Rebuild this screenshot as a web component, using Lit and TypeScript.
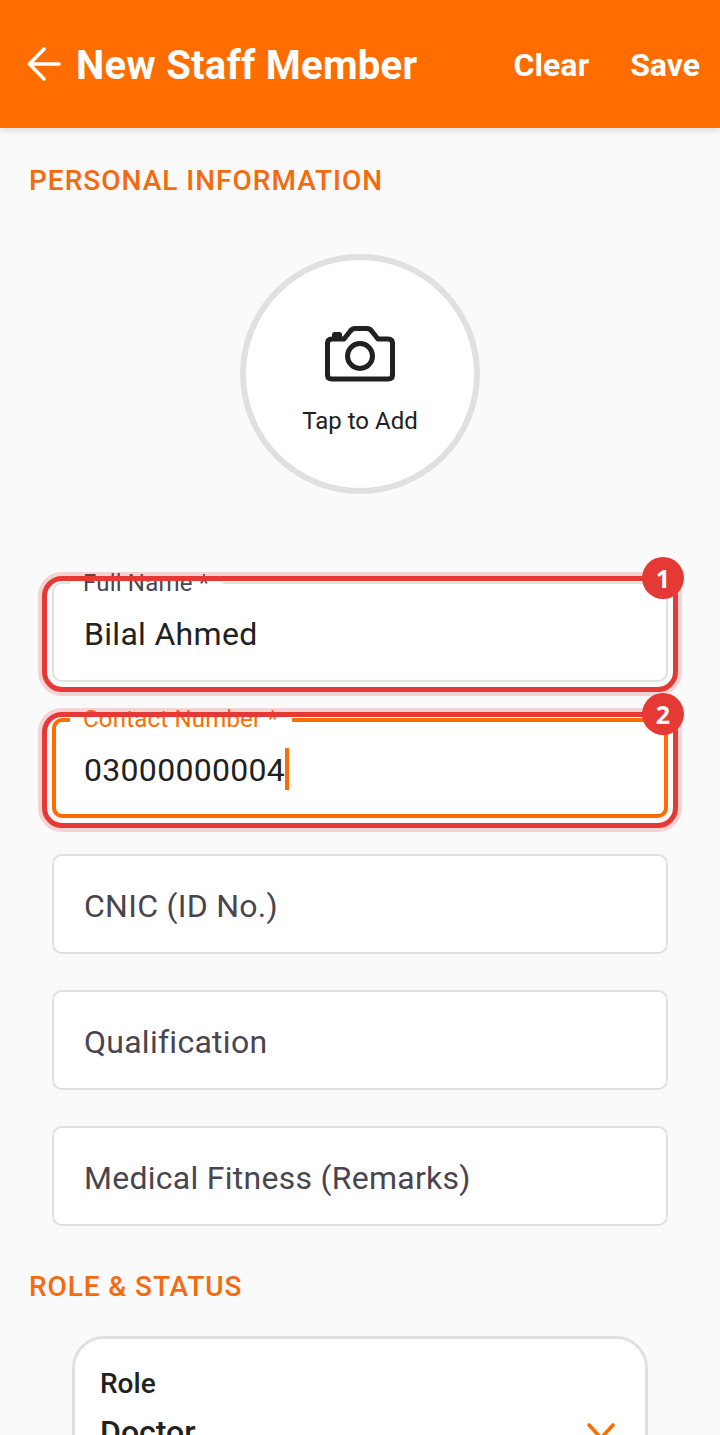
import { LitElement, html, css, svg } from "lit";
import { customElement } from "lit/decorators.js";

interface Field { label: string; value?: string; badge?: number; focus?: boolean; }
const fields: Field[] = [
  { label: "Full Name *", value: "Bilal Ahmed", badge: 1 },
  { label: "Contact Number *", value: "03000000004", badge: 2, focus: true },
  { label: "CNIC (ID No.)" },
  { label: "Qualification" },
  { label: "Medical Fitness (Remarks)" },
];

@customElement("app-root")
export class AppRoot extends LitElement {
  static styles = css`
    :host { display: block; width: 720px; height: 1435px; overflow: hidden; background: #fafafa; font-family: Roboto, "Noto Sans", sans-serif; color: #212121; }
    .bar { height: 128px; background: #ff6d00; box-shadow: 0 2px 8px rgba(0,0,0,.14); display: flex; align-items: center; padding: 0 20px 0 27px; color: #fff; position: relative; box-sizing: border-box; }
    .back { width: 34px; height: 34px; flex: none; margin-right: 16px; }
    .title { font-size: 40px; font-weight: 700; flex: 1; white-space: nowrap; letter-spacing: .25px; margin-top: 3px; margin-left: -1px; }
    .action { font-size: 32px; font-weight: 700; margin-left: 41px; margin-top: 2px; }
    .section { font-size: 28px; font-weight: 500; letter-spacing: 1px; color: #f56a0e; line-height: 32px; padding-left: 29px; }
    .s1 { margin-top: 36px; padding-top: 1px; }
    .avatar { box-sizing: border-box; width: 240px; height: 240px; margin: 57px auto 0; border: 6px solid #e0e0e0; border-radius: 50%; background: #fff; display: flex; flex-direction: column; align-items: center; }
    .cam { width: 70px; height: 56px; margin-top: 66px; display: block; }
    .tap { font-size: 24px; line-height: 30px; margin-top: 24px; }
    .fields { display: flex; flex-direction: column; gap: 36px; margin: 88px 52px 0; }
    .field { position: relative; box-sizing: border-box; height: 100px; border: 2px solid #e0e0e0; border-radius: 10px; background: #fff; display: flex; align-items: center; padding: 4px 0 0 30px; font-size: 32px; }
    .field.focus { border: 4px solid #ff6d00; padding-left: 28px; }
    .value { color: #212121; letter-spacing: .3px; }
    .ph { color: #49454f; letter-spacing: .27px; }
    .caret { display: inline-block; width: 4px; height: 42px; background: #ff6d00; margin-top: -2px; }
    .label { position: absolute; left: 16px; top: -15px; padding: 0 14px 0 13px; font-size: 24px; line-height: 28px; background: linear-gradient(transparent 13px, #fff 13px); color: #49454f; white-space: nowrap; letter-spacing: .2px; }
    .focus .label { left: 14px; top: -17px; color: #ff6d00; }
    .ring { position: absolute; left: -12px; right: -12px; top: -8px; bottom: -12px; border: 5px solid #e53935; border-radius: 20px; box-shadow: 0 0 0 4px rgba(229,57,53,.2); pointer-events: none; }
    .focus .ring { left: -14px; right: -14px; top: -10px; bottom: -14px; }
    .badge { position: absolute; right: -18px; top: -27px; width: 42px; height: 42px; border-radius: 50%; background: #e53935; color: #fff; font: 700 25px/42px "Noto Sans", sans-serif; text-align: center; }
    .focus .badge { right: -20px; top: -29px; }
    .s2 { margin-top: 45px; letter-spacing: .9px; }
    .card { box-sizing: border-box; margin: 33px 72px 0; height: 200px; border: 3px solid #e0e0e0; border-radius: 32px; background: #fff; padding: 28px 25px; position: relative; }
    .role { font-size: 28px; font-weight: 500; line-height: 34px; }
    .doc { font-size: 32px; font-weight: 500; line-height: 36px; margin-top: 13px; }
    .chev { position: absolute; left: 511px; top: 83px; width: 30px; height: 20px; }
  `;

  render() {
    return html`
      <div class="bar">
        <svg class="back" viewBox="0 0 34 34" fill="none" stroke="#fff" stroke-width="3.6" stroke-linecap="round" stroke-linejoin="round">
          <path d="M32 17H3M17 2L2.5 17L17 32" />
        </svg>
        <div class="title">New Staff Member</div>
        <div class="action">Clear</div>
        <div class="action">Save</div>
      </div>
      <div class="section s1">PERSONAL INFORMATION</div>
      <div class="avatar">
        <svg class="cam" viewBox="0 0 70 56" fill="none" stroke="#212121" stroke-width="5" stroke-linejoin="round">
          ${svg`<path d="M7 13H19L25 5.5Q27 2.5 30 2.5H42Q45 2.5 47 5.5L53 13H63Q67.5 13 67.5 17V49Q67.5 53 63 53H7Q2.5 53 2.5 49V17Q2.5 13 7 13Z"/><circle cx="35" cy="30" r="12.5"/><rect x="7" y="6" width="10" height="7" rx="2.5" fill="#212121" stroke="none"/>`}
        </svg>
        <div class="tap">Tap to Add</div>
      </div>
      <div class="fields">
        ${fields.map((f) => this.renderField(f))}
      </div>
      <div class="section s2">ROLE &amp; STATUS</div>
      <div class="card">
        <div class="role">Role</div>
        <div class="doc">Doctor</div>
        <svg class="chev" viewBox="0 0 30 20" fill="none" stroke="#ff6d00" stroke-width="3.6" stroke-linecap="round" stroke-linejoin="round"><path d="M3 3L15 16L27 3"/></svg>
      </div>
    `;
  }

  renderField(f: Field) {
    const filled = f.value !== undefined;
    return html`
      <div class="field ${f.focus ? "focus" : ""}">
        ${filled
          ? html`<div class="label">${f.label}</div><span class="value">${f.value}</span>${f.focus ? html`<span class="caret"></span>` : ""}`
          : html`<span class="ph">${f.label}</span>`}
        ${f.badge ? html`<div class="ring"></div><div class="badge">${f.badge}</div>` : ""}
      </div>
    `;
  }
}
